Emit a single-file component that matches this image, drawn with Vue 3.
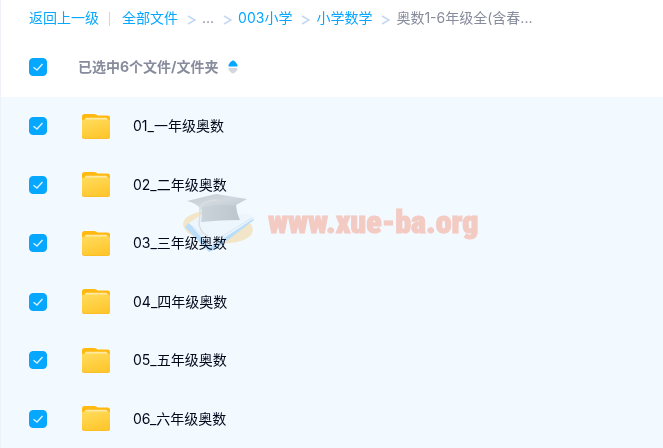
<script setup>
import { ref, computed } from 'vue'

const crumbs = [
  { text: '全部文件', link: true },
  { text: '...', link: false },
  { text: '003小学', link: true },
  { text: '小学数学', link: true },
  { text: '奥数1-6年级全(含春...', link: false },
]

const files = ref([
  { name: '01_一年级奥数', checked: true },
  { name: '02_二年级奥数', checked: true },
  { name: '03_三年级奥数', checked: true },
  { name: '04_四年级奥数', checked: true },
  { name: '05_五年级奥数', checked: true },
  { name: '06_六年级奥数', checked: true },
])

const count = computed(() => files.value.filter((f) => f.checked).length)
const all = computed({
  get: () => count.value === files.value.length,
  set: (v) => files.value.forEach((f) => (f.checked = v)),
})
</script>

<template>
  <main class="page">
    <nav class="crumbs">
      <a href="#" class="back">返回上一级</a>
      <span class="bar"></span>
      <template v-for="(c, i) in crumbs" :key="c.text">
        <svg v-if="i" class="sep" viewBox="0 0 9 10"><path d="M1 1 L8 5 L1 9" /></svg>
        <a v-if="c.link" href="#">{{ c.text }}</a>
        <span v-else class="plain">{{ c.text }}</span>
      </template>
    </nav>

    <header class="head">
      <span class="check">
        <input id="all" v-model="all" type="checkbox" />
        <svg viewBox="0 0 18 18"><path d="M4.5 9.2 L8 12 L13.5 6" /></svg>
      </span>
      <label class="title" for="all">已选中{{ count }}个文件/文件夹</label>
      <button class="sort" type="button" aria-label="排序">
        <svg viewBox="0 0 10 14">
          <path class="up" d="M1.4 6.500 Q0 6.500 .5 5 Q2 1.600 5 .3 Q8 1.600 9.500 5 Q10 6.500 8.600 6.500 Z" />
          <path class="down" d="M1.400 8 Q0 8 .5 9.500 Q2 12.600 5 13.800 Q8 12.600 9.500 9.500 Q10 8 8.600 8 Z" />
        </svg>
      </button>
    </header>

    <ul class="list">
      <li v-for="(f, i) in files" :key="f.name" class="row">
        <span class="check">
          <input :id="'file' + i" v-model="f.checked" type="checkbox" />
          <svg viewBox="0 0 18 18"><path d="M4.5 9.200 L8 12 L13.500 6" /></svg>
        </span>
        <svg class="folder" viewBox="0 0 28 25">
          <defs>
            <linearGradient :id="'front' + i" x1="0" y1="0" x2=".4" y2="1">
              <stop offset="0" stop-color="#ffdc5c" />
              <stop offset="1" stop-color="#ffc72f" />
            </linearGradient>
          </defs>
          <path fill="#ffb910" d="M0 2.500 Q0 0 2.500 0 H12 Q13.500 0 14.500 .8 L15.500 1.500 H25.500 Q28 1.500 28 4 V20 H0 Z" />
          <path fill="#ffe9a3" d="M3 7 V5 Q3 3.800 4.500 3.800 H23.500 Q25 3.800 25.500 5 V7 Z" />
          <path :fill="`url(#front${i})`" d="M0 7 Q0 5.500 1.500 5.500 H26.500 Q28 5.500 28 7 V22.500 Q28 25 25.500 25 H2.500 Q0 25 0 22.500 Z" />
          <path fill="none" stroke="#fbbb24" stroke-width=".8" d="M.5 22 Q.5 24.500 2.500 24.500 H25.500 Q27.500 24.500 27.500 22" />
        </svg>
        <label class="name" :for="'file' + i">{{ f.name }}</label>
      </li>
    </ul>

    <div class="mark">
      <svg class="cap" viewBox="0 0 74 60">
        <defs>
          <linearGradient id="board" x1="0" y1="0" x2="1" y2="1">
            <stop offset="0" stop-color="#cdd0d3" />
            <stop offset=".5" stop-color="#dcdee0" />
            <stop offset="1" stop-color="#c6c9cc" />
          </linearGradient>
          <linearGradient id="crown" x1="0" y1="0" x2="1" y2="0">
            <stop offset="0" stop-color="#d6d8db" />
            <stop offset="1" stop-color="#c8cacd" />
          </linearGradient>
        </defs>
        <ellipse cx="36" cy="33" rx="35" ry="16" fill="#ffebc8" transform="rotate(6 36 33)" />
        <path fill="#c4e4fa" d="M3 33 L27 58 L34 55 L72 26 L70 23 L28 49 L7 29 Z" />
        <path fill="#fbfcfd" d="M7 29 L19 21 L64 20 L74 23 L28 53 Z" />
        <path fill="none" stroke="#e4ebf1" stroke-width="1" d="M9 31 L29 49 L70 24" />
        <path fill="url(#crown)" d="M18 10 L54 8 Q54 18 58 26 Q38 26 19 28 Q21 19 18 10 Z" />
        <path fill="url(#board)" d="M5 7 L34 0 L65 5 L52 12 Q34 9 19 15 Q14 9 5 7 Z" />
        <path fill="none" stroke="#e6e6df" stroke-width="1.500" d="M35 6 Q20 7 18 14 Q18 24 17 31 M17 31 L20 38 L26 42" />
      </svg>
      <span class="site">www.xue-ba.org</span>
    </div>
  </main>
</template>

<style>
body {
  margin: 0;
}
</style>

<style scoped>
.page {
  position: relative;
  box-sizing: border-box;
  display: flex;
  flex-direction: column;
  min-height: 100vh;
  border-left: 1px solid #eef1f5;
  background: #fff;
  color: #03081a;
  font: 14px/20px Inter, "Noto Sans CJK SC", sans-serif;
}
.crumbs {
  display: flex;
  align-items: center;
  height: 36px;
  padding-left: 28px;
  white-space: nowrap;
}
a {
  color: #06a7ff;
  text-decoration: none;
}
.bar {
  width: 1px;
  height: 14px;
  margin: 2px 12px 0 10px;
  background: #c4d8f1;
}
.sep {
  width: 9px;
  height: 10px;
  margin: 3px 6px 0 9px;
  fill: none;
  stroke: #c4d8f4;
  stroke-width: 1.5;
}
.plain {
  color: #878c9c;
}
.head {
  display: flex;
  align-items: center;
  height: 60px;
  padding: 1px 0 0 28px;
}
.check {
  display: grid;
  flex: none;
  width: 18px;
  height: 18px;
}
.check > * {
  grid-area: 1 / 1;
}
.check input {
  appearance: none;
  width: 18px;
  height: 18px;
  margin: 0;
  border: 1px solid #c4d8f4;
  border-radius: 4px;
  background: #fff;
}
.check input:checked {
  border-color: #06a7ff;
  background: #06a7ff;
}
.check svg {
  fill: none;
  stroke: #d9f1ff;
  stroke-width: 1.4;
  pointer-events: none;
}
.title {
  margin-left: 31px;
  color: #878c9c;
  font-weight: 700;
}
.sort {
  display: flex;
  margin: 0 0 0 9px;
  padding: 0;
  border: 0;
  background: none;
}
.sort svg {
  width: 10px;
  height: 14px;
}
.up {
  fill: #06a7ff;
}
.down {
  fill: #d4d7de;
}
.list {
  display: grid;
  flex: 1;
  grid-auto-rows: 1fr;
  margin: 0;
  padding: 0;
  background: #f2f9ff;
  list-style: none;
}
.row {
  display: flex;
  align-items: center;
  min-height: 48px;
  padding-left: 28px;
}
.folder {
  width: 28px;
  height: 25px;
  margin-left: 35px;
}
.name {
  margin-left: 23px;
}
.mark {
  position: absolute;
  top: 194px;
  left: 181px;
  display: flex;
  align-items: center;
  pointer-events: none;
}
.cap {
  width: 74px;
  height: 60px;
  mix-blend-mode: multiply;
}
.site {
  margin: 0 0 4px 12px;
  color: #f3cbc3;
  font: 900 32px/40px Impact, "Roboto Condensed", "Open Sans Condensed", sans-serif;
  -webkit-text-stroke: 1px #f3cbc3;
}
</style>
